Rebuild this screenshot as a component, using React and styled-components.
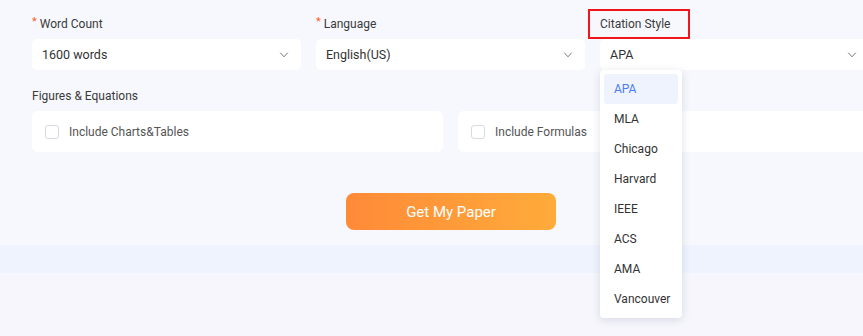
import React from "react";
import styled, { createGlobalStyle } from "styled-components";

const Global = createGlobalStyle`
  html, body { margin: 0; padding: 0; }
  body {
    background: #f6f6fc;
    font-family: Roboto, "Noto Sans", sans-serif;
    color: #333;
    overflow: hidden;
  }
`;

const Page = styled.div`
  width: 863px;
  height: 336px;
  overflow: hidden;
  position: relative;
`;

const Card = styled.section`
  background: #f7f8fd;
  height: 245px;
  box-sizing: border-box;
  padding: 15px 0 0 32px;
`;

const Band = styled.div`
  height: 28px;
  background: #eff3fd;
`;

const Form = styled.div`
  width: 838px;
`;

const Row = styled.div`
  display: grid;
  grid-template-columns: ${(p) => p.$cols};
  column-gap: 15px;
  margin-bottom: ${(p) => p.$mb || 0}px;
`;

const Field = styled.div`
  position: relative;
  display: flex;
  flex-direction: column;
`;

const Label = styled.label`
  font-size: 12px;
  line-height: 18px;
  height: 18px;
  margin-bottom: ${(p) => p.$mb || 6}px;
  color: #3a3a3a;
  display: flex;
  align-items: center;
  position: relative;
`;

const Star = styled.span`
  color: #ff5a1f;
  font-size: 11px;
  margin-right: 3px;
  position: relative;
  top: -2px;
`;

const Highlight = styled.span`
  position: absolute;
  left: -12px;
  top: -6px;
  width: 98px;
  height: 26px;
  border: 2px solid #f0151a;
`;

const Select = styled.div`
  height: 31px;
  background: #fff;
  border-radius: 5px;
  display: flex;
  align-items: center;
  justify-content: space-between;
  padding: 0 12px 0 10px;
  font-size: 12.5px;
  color: #333;
`;

const Box = styled.div`
  height: 41px;
  background: #fff;
  border-radius: 6px;
  display: flex;
  align-items: center;
  padding-left: 13px;
  font-size: 12px;
  color: #555;
  gap: 10px;
`;

const Check = styled.span`
  width: 12px;
  height: 12px;
  border: 1px solid #d8dae3;
  border-radius: 3px;
  background: #fff;
`;

const ButtonWrap = styled.div`
  display: flex;
  justify-content: center;
  margin-top: 41px;
`;

const Button = styled.button`
  width: 210px;
  height: 37px;
  border: none;
  border-radius: 8px;
  background: linear-gradient(90deg, #ff8a38, #ffab3a);
  color: #fff;
  font-family: inherit;
  font-size: 15px;
`;

const Menu = styled.ul`
  position: absolute;
  left: 0;
  top: 55px;
  width: 82px;
  margin: 0;
  padding: 4px;
  box-sizing: border-box;
  list-style: none;
  background: #fff;
  border-radius: 4px;
  box-shadow: 0 2px 8px rgba(30, 40, 80, 0.14);
  z-index: 2;
`;

const Item = styled.li`
  height: 30px;
  line-height: 30px;
  padding-left: 10px;
  font-size: 12px;
  border-radius: 3px;
  color: ${(p) => (p.$active ? "#4c7cf3" : "#333")};
  background: ${(p) => (p.$active ? "#eff3fd" : "transparent")};
`;

const Chevron = () => (
  <svg width="10" height="6" viewBox="0 0 10 6" fill="none">
    <path d="M1.5 1l3.5 3.8L8.5 1" stroke="#777" strokeWidth="1" strokeLinecap="round" strokeLinejoin="round" />
  </svg>
);

const styles = ["APA", "MLA", "Chicago", "Harvard", "IEEE", "ACS", "AMA", "Vancouver"];

export default function App() {
  return (
    <Page>
      <Global />
      <Card>
        <Form>
          <Row $cols="269px 269px 269px" $mb={17}>
            <Field>
              <Label>
                <Star>*</Star>Word Count
              </Label>
              <Select>
                1600 words <Chevron />
              </Select>
            </Field>
            <Field>
              <Label>
                <Star>*</Star>Language
              </Label>
              <Select>
                English(US) <Chevron />
              </Select>
            </Field>
            <Field>
              <Label>
                <Highlight />
                Citation Style
              </Label>
              <Select>
                APA <Chevron />
              </Select>
              <Menu>
                {styles.map((s, i) => (
                  <Item key={s} $active={i === 0}>
                    {s}
                  </Item>
                ))}
              </Menu>
            </Field>
          </Row>
          <Label $mb={6}>Figures &amp; Equations</Label>
          <Row $cols="411px 411px">
            <Box>
              <Check />
              Include Charts&amp;Tables
            </Box>
            <Box>
              <Check />
              Include Formulas
            </Box>
          </Row>
          <ButtonWrap>
            <Button>Get My Paper</Button>
          </ButtonWrap>
        </Form>
      </Card>
      <Band />
    </Page>
  );
}
